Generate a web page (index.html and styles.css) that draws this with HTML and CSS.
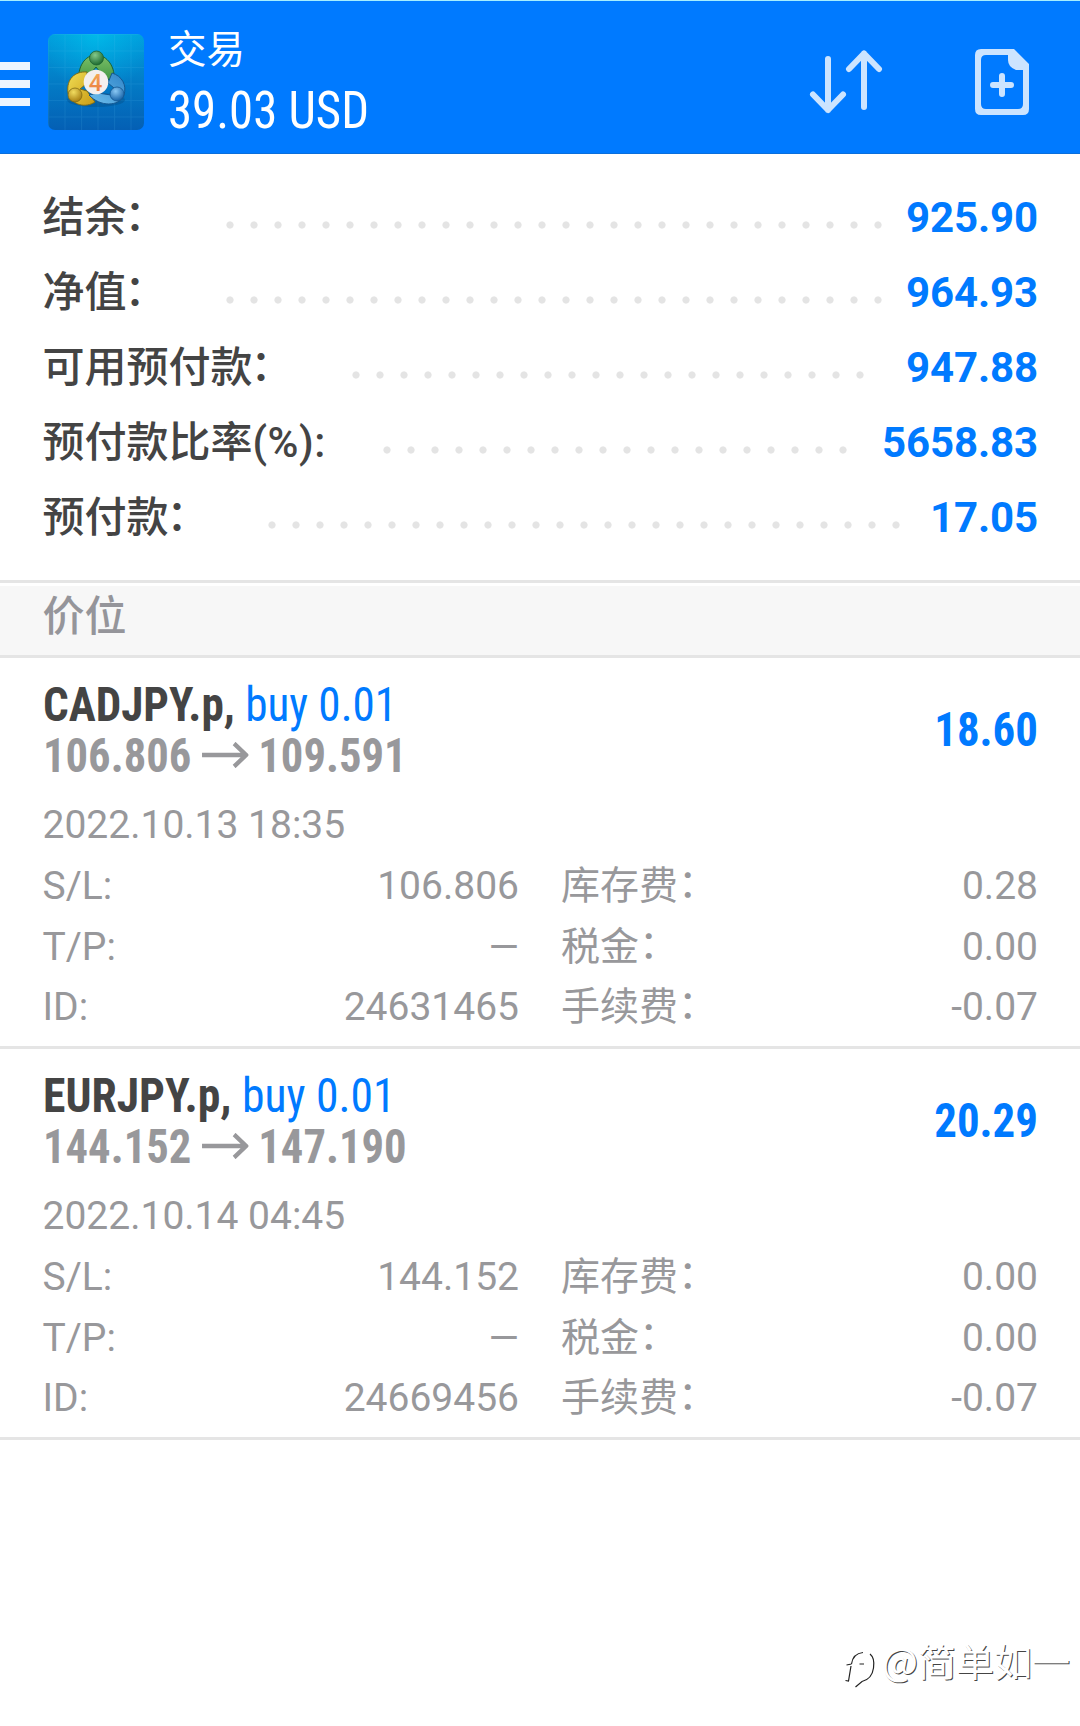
FILE: index.html
```html
<!DOCTYPE html>
<html lang="zh-CN">
<head>
<meta charset="utf-8">
<title>交易</title>
<link rel="stylesheet" href="styles.css">
</head>
<body>
<header class="topbar">
  <div class="menu"><i></i><i></i><i></i></div>
  <svg class="logo" viewBox="0 0 96 96">
    <defs>
      <linearGradient id="bg" x1="0" y1="0" x2="0" y2="1"><stop offset="0" stop-color="#009fdc"/><stop offset=".5" stop-color="#037cc6"/><stop offset="1" stop-color="#045fb4"/></linearGradient>
      <radialGradient id="glow" cx=".5" cy="0" r=".6"><stop offset="0" stop-color="#00c4ee" stop-opacity=".7"/><stop offset="1" stop-color="#00b4ea" stop-opacity="0"/></radialGradient>
      <linearGradient id="green" x1="0" y1="0" x2="0" y2="1"><stop offset="0" stop-color="#7cc069"/><stop offset="1" stop-color="#3f9440"/></linearGradient>
      <linearGradient id="yellow" x1="0" y1="0" x2="1" y2="1"><stop offset="0" stop-color="#f0de55"/><stop offset="1" stop-color="#c99a13"/></linearGradient>
      <linearGradient id="blue" x1="1" y1="0" x2="0" y2="1"><stop offset="0" stop-color="#2f84c8"/><stop offset="1" stop-color="#6fc0ee"/></linearGradient>
      <radialGradient id="gh" cx=".4" cy=".3" r=".7"><stop offset="0" stop-color="#83c98a"/><stop offset="1" stop-color="#1d6b30"/></radialGradient>
      <radialGradient id="yh" cx=".4" cy=".3" r=".7"><stop offset="0" stop-color="#f1dc60"/><stop offset="1" stop-color="#a87f12"/></radialGradient>
      <radialGradient id="bh" cx=".4" cy=".3" r=".7"><stop offset="0" stop-color="#8ac8f4"/><stop offset="1" stop-color="#1763a8"/></radialGradient>
      <linearGradient id="four" x1="0" y1="0" x2="0" y2="1"><stop offset="0" stop-color="#f6b45c"/><stop offset="1" stop-color="#e8703a"/></linearGradient>
      <pattern id="grid" width="16.5" height="16.5" patternUnits="userSpaceOnUse"><path d="M.5 0V16.5M0 .5H16.5" stroke="#5cc4f0" stroke-opacity=".13"/></pattern>
    </defs>
    <rect width="96" height="96" rx="7" fill="url(#bg)"/>
    <rect width="96" height="96" rx="7" fill="url(#glow)"/>
    <rect width="96" height="96" rx="7" fill="url(#grid)"/>
    <ellipse cx="48" cy="66" rx="29" ry="7" fill="#03477f" opacity=".35"/>
    <path d="M31 48C29 33 37 21 48 21S68 33 66 48L56 43 48 33 40 43Z" fill="url(#green)" stroke="#1d6231"/>
    <path d="M39 38C27 37 18 45 20 59 24 72 38 74 47 68L39 57 32 55 38 50Z" fill="url(#yellow)" stroke="#806c14"/>
    <path d="M64 39C74 42 79 51 76 61 71 73 52 73 41 61L50 59 63 61 66 54 60 49Z" fill="url(#blue)" stroke="#145791"/>
    <circle cx="48.500" cy="24" r="7" fill="url(#gh)" stroke="#1d6231" stroke-width=".8"/>
    <circle cx="27" cy="61" r="7" fill="url(#yh)" stroke="#806c14" stroke-width=".8"/>
    <circle cx="69" cy="60" r="7" fill="url(#bh)" stroke="#145791" stroke-width=".8"/>
    <circle cx="48" cy="48" r="12.300" fill="#f3efee"/>
    <text x="47.500" y="56.500" class="logo-num" fill="url(#four)">4</text>
  </svg>
  <div class="heading">
    <div class="title">交易</div>
    <div class="total cond">39.03 USD</div>
  </div>
  <svg class="sort" viewBox="0 0 74 66" fill="none" stroke="#cce4ff" stroke-width="6" stroke-linecap="round" stroke-linejoin="round"><path d="M19 10V61M4 45.500L19 61 34 45.500M55 58V4.500M40 20L55 4.500 70 20"/></svg>
  <svg class="neworder" viewBox="0 0 54 66"><path fill="#cce4ff" fill-rule="evenodd" d="M6 0H39L54 15V60Q54 66 48 66H6Q0 66 0 60V6Q0 0 6 0ZM11 6Q6 6 6 11V55Q6 60 11 60H43Q48 60 48 55V21H41Q33 18 33 11V6Z"/><path d="M27 27V45M18 36H36" stroke="#cce4ff" stroke-width="6" stroke-linecap="round"/></svg>
</header>

<section class="summary">
  <div class="sum-row"><span>结余<i class="colon">：</i></span><i class="dots" style="--dots:28"></i><b>925.90</b></div>
  <div class="sum-row"><span>净值<i class="colon">：</i></span><i class="dots" style="--dots:28"></i><b>964.93</b></div>
  <div class="sum-row"><span>可用预付款<i class="colon">：</i></span><i class="dots" style="--dots:22"></i><b>947.88</b></div>
  <div class="sum-row"><span>预付款比率<i class="unit">(%):</i></span><i class="dots" style="--dots:20"></i><b>5658.83</b></div>
  <div class="sum-row"><span>预付款<i class="colon">：</i></span><i class="dots" style="--dots:27"></i><b>17.05</b></div>
</section>

<h2 class="section-title">价位</h2>

<article class="position">
  <div class="pos-head">
    <div>
      <div class="name cond"><b>CADJPY.p,</b> <span>buy 0.01</span></div>
      <div class="prices"><b class="cond">106.806</b><svg class="arrow" viewBox="0 0 50 26"><path d="M0 13H48M34.500 1.500L47.500 13 34.500 24.500"/></svg><b class="cond">109.591</b></div>
    </div>
    <b class="profit cond">18.60</b>
  </div>
  <div class="date">2022.10.13 18:35</div>
  <div class="details">
    <span>S/L:</span><span>106.806</span><span>库存费<i class="colon">：</i></span><span>0.28</span>
    <span>T/P:</span><span>—</span><span>税金<i class="colon">：</i></span><span>0.00</span>
    <span>ID:</span><span>24631465</span><span>手续费<i class="colon">：</i></span><span>-0.07</span>
  </div>
</article>

<article class="position">
  <div class="pos-head">
    <div>
      <div class="name cond wide"><b>EURJPY.p,</b> <span>buy 0.01</span></div>
      <div class="prices"><b class="cond">144.152</b><svg class="arrow" viewBox="0 0 50 26"><path d="M0 13H48M34.500 1.500L47.500 13 34.500 24.500"/></svg><b class="cond">147.190</b></div>
    </div>
    <b class="profit cond">20.29</b>
  </div>
  <div class="date">2022.10.14 04:45</div>
  <div class="details">
    <span>S/L:</span><span>144.152</span><span>库存费<i class="colon">：</i></span><span>0.00</span>
    <span>T/P:</span><span>—</span><span>税金<i class="colon">：</i></span><span>0.00</span>
    <span>ID:</span><span>24669456</span><span>手续费<i class="colon">：</i></span><span>-0.07</span>
  </div>
</article>

<footer class="watermark">
  <svg viewBox="0 0 34 40" fill="none" stroke="#222" stroke-width="1.200"><path d="M6.500 13Q8 2.500 18 1.500M25 3Q30 7 28.500 17 27 28 17 30.500L10.500 36M1.500 14L6.500 13M6 15L3.500 30 .5 29.500M14.500 13H19"/></svg>
  <span>@简单如一</span>
</footer>
</body>
</html>
```
FILE: styles.css
```css
* { box-sizing: border-box; }
body {
  margin: 0;
  width: 1080px;
  height: 1726px;
  display: flex;
  flex-direction: column;
  background: #fff;
  color: #444;
  font-family: Roboto, "Noto Sans CJK SC", sans-serif;
}
i { font-style: normal; }
.cond { font-stretch: 75%; }
.colon { display: inline-block; line-height: 1; vertical-align: 2px; }

.topbar {
  height: 154px;
  flex: none;
  display: flex;
  align-items: flex-start;
  background: #007aff;
  border-top: 1px solid #a6efff;
  border-bottom: 1px solid #0a6fdc;
  color: #fff;
}
.menu { width: 30px; margin-top: 61px; display: grid; gap: 10px; }
.menu i { height: 8px; background: #edf5ff; }
.logo { width: 96px; height: 96px; margin: 33px 0 0 18px; }
.logo-num { font: 500 24px Roboto, sans-serif; text-anchor: middle; }
.heading { width: 400px; margin: 24px 0 0 24px; white-space: nowrap; }
.title { font-size: 38.5px; line-height: 50px; }
.total {
  font-size: 51px;
  line-height: 72px;
  transform: scaleX(.957);
  transform-origin: left;
}
.sort { width: 74px; height: 66px; margin: 48px 0 0 auto; }
.neworder { width: 54px; height: 66px; margin: 48px 51px 0 92px; }

.summary { height: 426px; padding: 26px 42px 0 42.5px; }
.sum-row {
  height: 75px;
  display: flex;
  align-items: center;
  font-size: 42px;
  line-height: 75px;
  font-weight: 500;
}
.sum-row b { margin-left: auto; color: #007aff; font-weight: 700; letter-spacing: -.1px; }
.sum-row .colon { margin: 0 2px 0 -2px; }
.unit { letter-spacing: .5px; }
.dots {
  width: calc(var(--dots) * 24px);
  height: 8px;
  margin: 15px 0 0 49.5px;
  background: radial-gradient(circle, #e4e4e4 3.2px, transparent 4px) 0 0 / 24px 8px;
}

.section-title {
  height: 78px;
  flex: none;
  margin: 0;
  padding: 0 42.5px;
  border: solid #e5e5e5;
  border-width: 3px 0;
  background: #f7f7f7;
  box-shadow: inset 0 3px #fff;
  color: #95959a;
  font-size: 42px;
  line-height: 67px;
  font-weight: 500;
}

.position {
  height: 391px;
  padding: 21px 42px 0 42.5px;
  border-bottom: 3px solid #e5e5e5;
  color: #98989b;
  font-size: 39px;
}
.pos-head { display: flex; justify-content: space-between; align-items: center; font-size: 48px; line-height: 51px; }
.name, .prices { transform: scaleX(.94); transform-origin: left; }
.name.wide { transform: scaleX(.95); }
.name b { color: #444; }
.name span, .profit { color: #007aff; }
.profit { padding-bottom: 1px; transform: scaleX(.935); transform-origin: right; }
.prices { display: flex; align-items: center; gap: 11px; transform: scaleX(.93); }
.arrow { width: 50px; height: 26px; margin-top: -2px; fill: none; stroke: currentColor; stroke-width: 4.5; }
.date { margin-top: 14px; line-height: 61px; }
.details {
  display: grid;
  grid-template-columns: 100px 376.5px 300px 1fr;
  grid-template-rows: 61px 61px 59px;
  line-height: 61px;
}
.details span:nth-last-child(-n + 4) { line-height: 59px; }
.details span:nth-child(even) { text-align: right; }
.details span:nth-child(4n + 3) { padding-left: 42px; }

.watermark {
  margin-top: auto;
  height: 91px;
  padding-right: 10px;
  display: flex;
  justify-content: flex-end;
  color: #fff;
  font: 38px/50px "Noto Sans CJK SC", sans-serif;
  text-shadow: 1px 1px 0 #444;
}
.watermark svg { width: 34px; height: 40px; margin: 16px 3px 0 0; }
```
